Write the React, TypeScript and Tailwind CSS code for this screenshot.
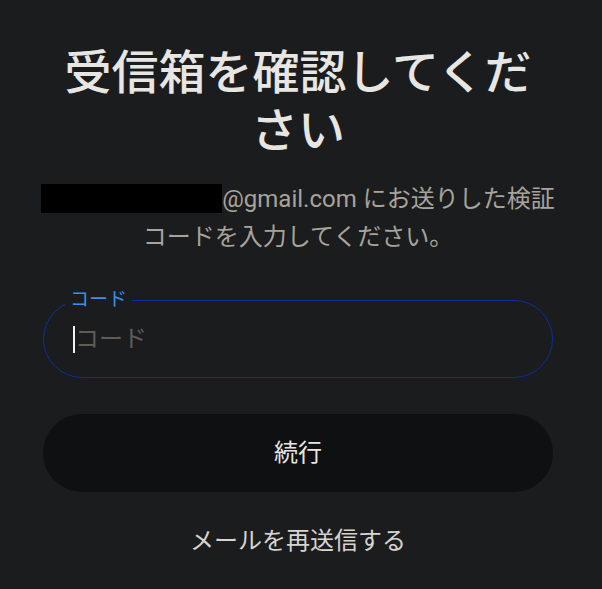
export default function App() {
  return (
    <div
      className="min-h-[589px] bg-[#1b1c1e] pt-[44px]"
      style={{ fontFamily: 'Roboto, "Noto Sans CJK JP", sans-serif' }}
    >
      <div className="flex w-[510px] flex-col items-center" style={{ marginLeft: 43 }}>
        <h1 className="w-[490px] text-center text-[47px] font-medium leading-[58px] text-[#e8e6e3]">
          受信箱を確認してください
        </h1>

        <p className="mt-[20px] w-[516px] text-center text-[24px] leading-[38px] text-[#a8a39b]">
          <span className="inline-block h-[29px] w-[181px] bg-black align-[-6px]" />
          @gmail.com にお送りした検証コードを入力してください。
        </p>

        <div className="relative mt-[44px] h-[78px] w-full rounded-full border border-[#0e2e9c]">
          <span className="absolute -top-[13px] left-[21px] bg-[#1b1c1e] px-[5px] text-[19px] leading-[24px] text-[#3b8ef0]">
            コード
          </span>
          <div className="flex h-full items-center pl-[29px]">
            <span className="h-[27px] w-[2px] bg-[#f0f0f0]" />
            <input
              className="w-full bg-transparent text-[24px] text-[#e8e6e3] outline-none placeholder:text-[#5f5c57]"
              placeholder="コード"
            />
          </div>
        </div>

        <button className="mt-[36px] h-[78px] w-full rounded-full bg-[#0f1012] text-[24px] text-[#e8e6e3]">
          続行
        </button>

        <button className="mt-[30px] text-[24px] leading-[38px] text-[#d8d4cf]">
          メールを再送信する
        </button>
      </div>
    </div>
  );
}
